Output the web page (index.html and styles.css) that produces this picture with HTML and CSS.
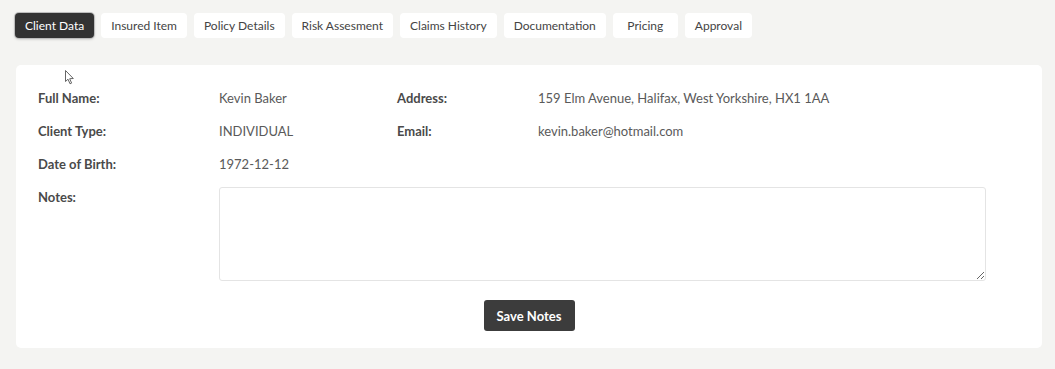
FILE: index.html
```html
<!DOCTYPE html>
<html>
<head>
<meta charset="utf-8">
<link rel="stylesheet" href="styles.css">
</head>
<body>
<div class="page">
  <nav class="tabs">
    <button class="tab active">Client Data</button>
    <button class="tab">Insured Item</button>
    <button class="tab">Policy Details</button>
    <button class="tab">Risk Assesment</button>
    <button class="tab">Claims History</button>
    <button class="tab">Documentation</button>
    <button class="tab">Pricing</button>
    <button class="tab">Approval</button>
  </nav>
  <section class="card">
    <svg class="cursor" width="10" height="15" viewBox="0 0 10 15"><path d="M0.5 0.5 L0.5 11.5 L3 9.2 L5 13.8 L6.6 13.1 L4.7 8.7 L8.3 8.5 Z" fill="#fff" stroke="#555" stroke-width="0.9" stroke-linejoin="round"/></svg>
    <div class="grid">
      <div class="label">Full Name:</div>
      <div class="value">Kevin Baker</div>
      <div class="label">Address:</div>
      <div class="value">159 Elm Avenue, Halifax, West Yorkshire, HX1 1AA</div>

      <div class="label">Client Type:</div>
      <div class="value">INDIVIDUAL</div>
      <div class="label">Email:</div>
      <div class="value">kevin.baker@hotmail.com</div>

      <div class="label">Date of Birth:</div>
      <div class="value">1972-12-12</div>
      <div></div>
      <div></div>

      <div class="label">Notes:</div>
      <textarea class="notes"></textarea>
    </div>
    <div class="actions">
      <button class="save">Save Notes</button>
    </div>
  </section>
</div>
</body>
</html>
```
FILE: styles.css
```css
html, body {
  margin: 0;
  padding: 0;
  background: #f4f4f2;
  font-family: Lato, "Open Sans", sans-serif;
}
.page {
  padding: 13px 13px 0 16px;
}
.tabs {
  display: flex;
  gap: 7px;
  margin-left: -1px;
}
.tab {
  font-family: Lato, sans-serif;
  font-size: 12px;
  color: #444;
  background: #fff;
  border: none;
  border-radius: 4px;
  height: 25px;
  min-width: 65px;
  padding: 0 10px;
  cursor: pointer;
}
.tab.active {
  background: #333;
  color: #fff;
  box-shadow: 0 0 0 1px #bdbdbd, 0 1px 3px rgba(0,0,0,0.25);
}
.card {
  position: relative;
  margin-top: 27px;
  background: #fff;
  border-radius: 5px;
  padding: 23px 56px 17px 22px;
}
.cursor {
  position: absolute;
  left: 49px;
  top: 5px;
}
.grid {
  display: grid;
  grid-template-columns: 181px 178px 141px 1fr;
  row-gap: 13px;
  font-size: 13px;
  line-height: 20px;
}
.label {
  font-weight: 700;
  color: #4a4a4a;
}
.value {
  color: #5a5a5a;
}
.notes {
  grid-column: 2 / 5;
  height: 94px;
  box-sizing: border-box;
  border: 1px solid #e4e4e4;
  border-radius: 3px;
  resize: vertical;
  font-family: Lato, sans-serif;
}
.actions {
  display: flex;
  justify-content: center;
  margin-top: 19px;
  padding-left: 34px;
}
.save {
  font-family: Lato, sans-serif;
  font-size: 13px;
  font-weight: 700;
  color: #fff;
  background: #3c3c3c;
  border: none;
  border-radius: 3px;
  width: 91px;
  height: 31px;
}
```
